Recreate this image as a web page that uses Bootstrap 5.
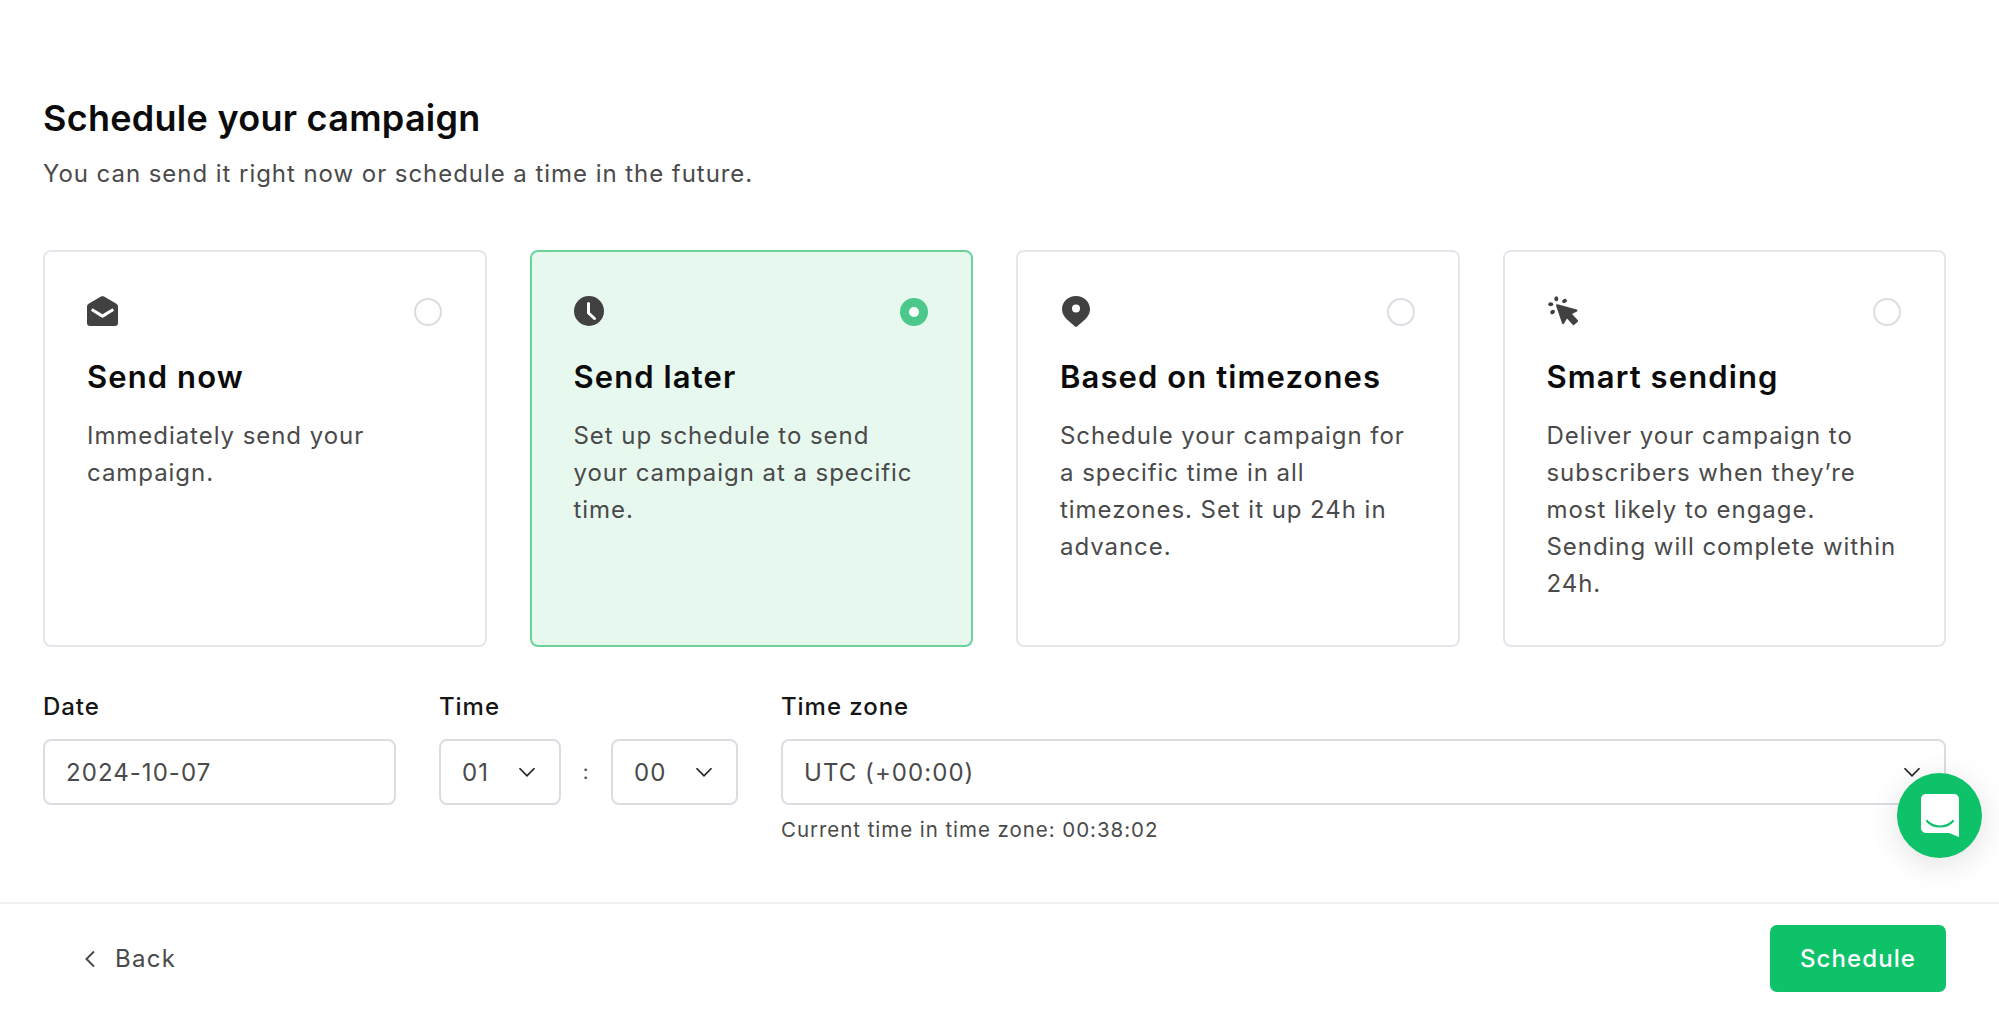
<!DOCTYPE html>
<html lang="en">
<head>
<meta charset="utf-8">
<title>Schedule your campaign</title>
<link href="https://cdn.jsdelivr.net/npm/bootstrap@5.3.0/dist/css/bootstrap.min.css" rel="stylesheet">
<style>
html,body{height:100%}
body{font-family:Inter,"Liberation Sans",sans-serif;background:#fff;color:#4a4a4a;font-size:24px;letter-spacing:.95px;overflow:hidden}
.page-shell{height:1023px;display:flex;flex-direction:column}
.page-main{flex:0 0 902px;padding:96px 53px 0 43px}
.page-title{font-size:36px;font-weight:600;line-height:44px;letter-spacing:.27px;color:#0b0b0b;margin:0 0 17px}
.page-sub{line-height:33px;margin:0 0 60px;color:#4a4a4a}
.opt-row{display:grid;grid-template-columns:repeat(4,1fr);gap:43px;height:397px}
.opt-card{border:2px solid #e5e6eb;border-radius:8px;padding:44px 43px 0 42px;background:#fff}
.opt-card.is-on{background:#e7f8ef;border-color:#6bd29a}
.opt-head{height:31px;margin-bottom:31px;justify-content:space-between;align-items:flex-start}
.opt-head svg{display:block;fill:#414141}
.opt-head svg.pin-ico{margin-left:2px}
.opt-head svg.cur-ico{margin-left:1px}
.opt-radio{width:28px;height:28px;margin:2px 0 0;border:2px solid #dcdde2;border-radius:50%;background:#fff;flex:none}
.opt-radio.is-on{border:9px solid #4cc98a;background:#fff}
.opt-title{font-size:31px;font-weight:600;line-height:38px;letter-spacing:1.1px;color:#0b0b0b;margin:0 0 21px}
.opt-text{line-height:37px;margin:0}
.form-strip{margin-top:44px;gap:43px}
.field-date{flex:0 0 353px}
.field-time{flex:0 0 299px}
.field-zone{flex:1 1 auto;min-width:0}
.field-label{font-size:24px;font-weight:500;line-height:32px;color:#161616;margin:0 0 16px;display:block}
.form-control.ctl,.form-select.ctl{height:66px;border:2px solid #dcdde3;border-radius:8px;font-size:24px;letter-spacing:1.05px;color:#4a4a4a;padding:0 21px;box-shadow:none}
.form-select.ctl{padding-top:1px;background-image:url("data:image/svg+xml,%3csvg xmlns='http://www.w3.org/2000/svg' viewBox='0 0 16 16'%3e%3cpath fill='none' stroke='%23222' stroke-width='1.4' d='M2 5l6 6 6-6'/%3e%3c/svg%3e");background-size:20px 20px;background-position:right 22px center}
.sel-a{flex:0 0 122px}
.sel-b{flex:0 0 127px}
.time-sep{flex:1 1 auto;text-align:center;font-size:20px}
.zone-hint{font-size:20.5px;line-height:28px;margin:11px 0 0}
.page-foot{flex:0 0 121px;border-top:2px solid #f0f0f2;padding:21px 53px 0 84px;justify-content:space-between;align-items:flex-start}
.back-link{height:67px;gap:19px;color:#4a4a4a;font-size:24px;letter-spacing:1.25px;padding:0;border:0}
.go-btn{width:176px;height:67px;border:0;border-radius:7px;background:#0ec26a;color:#fff;font-size:24px;letter-spacing:1.1px;font-weight:500;padding:0}
.go-btn:hover{background:#0ec26a;color:#fff}
.chat-fab{position:absolute;left:1897px;top:773px;width:85px;height:85px;border-radius:50%;background:#0ec26a;box-shadow:0 6px 32px rgba(0,0,0,.12);border:0;padding:0}
</style>
</head>
<body>
<div class="page-shell position-relative">
  <main class="page-main">
    <h1 class="page-title">Schedule your campaign</h1>
    <p class="page-sub">You can send it right now or schedule a time in the future.</p>
    <div class="opt-row">
      <div class="card opt-card">
        <div class="d-flex opt-head">
          <svg width="31" height="30" viewBox="0 0 31 30"><path fill-rule="evenodd" d="M14 .6c1-.6 2-.6 3 0l12 6.900c1.300.8 2 1.800 2 3.200V27c0 1.800-1.200 3-3 3H3c-1.800 0-3-1.200-3-3V10.700c0-1.400.7-2.400 2-3.200zM5.400 12.200 4 14.700l10.200 6.500c.9.6 1.800.6 2.600 0L27 14.700l-1.400-2.500-10.100 6z"/></svg>
          <span class="opt-radio"></span>
        </div>
        <h2 class="opt-title">Send now</h2>
        <p class="opt-text">Immediately send your campaign.</p>
      </div>
      <div class="card opt-card is-on">
        <div class="d-flex opt-head">
          <svg width="30" height="30" viewBox="0 0 30 30"><circle cx="15" cy="15" r="15"/><path d="M14.500 7.500v9.500l6 5.500" stroke="#fff" stroke-width="3" stroke-linecap="round" stroke-linejoin="round" style="fill:none"/></svg>
          <span class="opt-radio is-on"></span>
        </div>
        <h2 class="opt-title">Send later</h2>
        <p class="opt-text">Set up schedule to send your campaign at a specific time.</p>
      </div>
      <div class="card opt-card">
        <div class="d-flex opt-head">
          <svg class="pin-ico" width="28" height="31" viewBox="0 0 28 31"><path fill-rule="evenodd" d="M14 0c7.700 0 14 5.800 14 13.200 0 4.300-2 7-5 10.300L15 30.500c-.6.600-1.400.6-2 0l-8-7C2 20.200 0 17.500 0 13.200 0 5.800 6.300 0 14 0zm0 8.500a4 4 0 1 0 0 8 4 4 0 0 0 0-8z"/></svg>
          <span class="opt-radio"></span>
        </div>
        <h2 class="opt-title">Based on timezones</h2>
        <p class="opt-text">Schedule your campaign for a specific time in all timezones. Set it up 24h in advance.</p>
      </div>
      <div class="card opt-card">
        <div class="d-flex opt-head">
          <svg class="cur-ico" width="32" height="30" viewBox="0 0 32 30"><path d="M9.500 8.300c-.9-.3-1.700.5-1.400 1.400l6 17.700c.3.900 1.400 1 1.900.2l3-5.100 5.700 6.300c.5.500 1.200.5 1.700 0l3.300-3c.5-.5.500-1.200 0-1.700l-5.700-6 4.900-2.600c.8-.5.700-1.600-.2-1.900z"/><ellipse cx="8.300" cy="2.700" rx="2" ry="2.500"/><ellipse cx="16.500" cy="5" rx="2.500" ry="2" transform="rotate(-25 16.500 5)"/><ellipse cx="2.700" cy="8.200" rx="2.500" ry="2"/><ellipse cx="4.600" cy="16" rx="2.500" ry="2" transform="rotate(-35 4.600 16)"/></svg>
          <span class="opt-radio"></span>
        </div>
        <h2 class="opt-title">Smart sending</h2>
        <p class="opt-text">Deliver your campaign to subscribers when they’re most likely to engage. Sending will complete within 24h.</p>
      </div>
    </div>
    <form class="d-flex form-strip">
      <div class="field-date">
        <label class="field-label" for="d">Date</label>
        <input id="d" class="form-control ctl" value="2024-10-07">
      </div>
      <div class="field-time">
        <span class="field-label">Time</span>
        <div class="d-flex align-items-center">
          <select class="form-select ctl sel-a" aria-label="Hour"><option>01</option></select>
          <span class="time-sep">:</span>
          <select class="form-select ctl sel-b" aria-label="Minute"><option>00</option></select>
        </div>
      </div>
      <div class="field-zone">
        <label class="field-label" for="z">Time zone</label>
        <select id="z" class="form-select ctl"><option>UTC (+00:00)</option></select>
        <p class="zone-hint">Current time in time zone: 00:38:02</p>
      </div>
    </form>
  </main>
  <footer class="d-flex page-foot">
    <button type="button" class="btn d-flex align-items-center back-link">
      <svg width="12" height="18" viewBox="0 0 12 18"><path d="M10 1.500 2.500 9l7.500 7.500" fill="none" stroke="#4a4a4a" stroke-width="2"/></svg>
      Back
    </button>
    <button type="button" class="btn go-btn">Schedule</button>
  </footer>
  <button type="button" class="chat-fab d-flex align-items-center justify-content-center" aria-label="Chat">
    <svg width="38" height="43" viewBox="0 0 38 43"><path fill="#fff" d="M5 0h28c2.800 0 5 2.200 5 5v38l-10-4H5c-2.800 0-5-2.200-5-5V5c0-2.800 2.200-5 5-5z"/><path d="M6 27c3 3.500 8 5.500 13 5.500S29 30.500 32 27" fill="none" stroke="#0ec26a" stroke-width="2.200" stroke-linecap="round"/></svg>
  </button>
</div>
<script src="https://cdn.jsdelivr.net/npm/bootstrap@5.3.0/dist/js/bootstrap.bundle.min.js"></script>
</body>
</html>
